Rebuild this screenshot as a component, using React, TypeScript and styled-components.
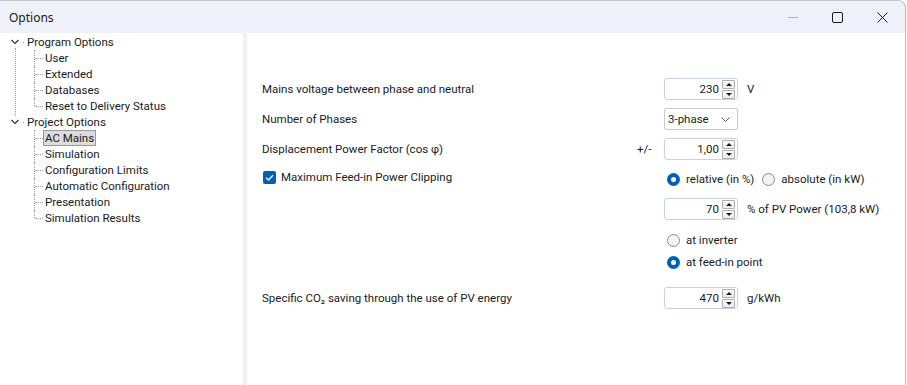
import * as React from "react";
import styled, { createGlobalStyle } from "styled-components";

const GlobalStyle = createGlobalStyle`
  html, body {
    margin: 0;
    padding: 0;
    background: #ffffff;
  }
  body {
    font-family: Roboto, "Noto Sans", "Liberation Sans", sans-serif;
    font-size: 11.5px;
    color: #1a1a1a;
  }
`;

const SWindow = styled.div`
  width: 906px;
  height: 385px;
  display: flex;
  flex-direction: column;
  border-top: 1px solid #c4c7cc;
  border-right: 1px solid #b8bcc2;
  border-top-right-radius: 8px;
  box-sizing: border-box;
  overflow: hidden;
  background: #eef1f7;
`;

const STitleBar = styled.div`
  height: 32px;
  flex: none;
  display: flex;
  align-items: center;
  justify-content: space-between;
  padding-left: 9px;
`;

const STitle = styled.span`
  font-family: "Noto Sans", sans-serif;
  font-size: 12px;
  color: #1a1a1a;
`;

const SCaptionButtons = styled.div`
  display: flex;
  height: 100%;
`;

const SCaptionButton = styled.div`
  width: 45px;
  height: 100%;
  display: flex;
  align-items: center;
  justify-content: center;
`;

const SBody = styled.div`
  flex: 1;
  display: flex;
  background: #ffffff;
`;

const STreePane = styled.div`
  width: 243px;
  flex: none;
  padding-top: 1px;
  background: #ffffff;
`;

const SSplitter = styled.div`
  width: 4px;
  flex: none;
  background: #f0f0f0;
`;

const SContent = styled.div`
  flex: 1;
  display: flex;
  flex-direction: column;
  padding-left: 15px;
`;

/* ---- tree ---- */

const STreeList = styled.ul`
  list-style: none;
  margin: 0;
  padding: 0;
`;

const SParent = styled.li<{ last?: boolean }>`
  position: relative;

  &::before {
    content: "";
    position: absolute;
    left: 15px;
    top: 14px;
    bottom: -2px;
    border-left: 1px dotted #a0a0a0;
    display: ${({ last }) => (last ? "none" : "block")};
  }
`;

const SParentRow = styled.div`
  height: 16px;
  display: flex;
  align-items: center;
  padding-left: 11px;
`;

const SChevron = styled.svg`
  width: 8px;
  height: 6px;
  flex: none;
`;

const SDotStub = styled.span`
  width: 1px;
  height: 1px;
  margin: 1px 3px 0 4px;
  background: #8a8a8a;
`;

const SChildren = styled.ul`
  list-style: none;
  margin: 0;
  padding: 0 0 0 34px;
`;

const SChild = styled.li<{ last?: boolean }>`
  position: relative;
  height: 16px;
  display: flex;
  align-items: center;
  padding-left: 11px;

  &::before {
    content: "";
    position: absolute;
    left: 0;
    top: 0;
    height: ${({ last }) => (last ? "8px" : "16px")};
    border-left: 1px dotted #a0a0a0;
  }

  &::after {
    content: "";
    position: absolute;
    left: 1px;
    top: 8px;
    width: 8px;
    border-top: 1px dotted #a0a0a0;
  }
`;

const SChildLabel = styled.span<{ selected?: boolean }>`
  padding: 0 1px;
  line-height: 14px;
  border: 1px solid ${({ selected }) => (selected ? "#9a9a9a" : "transparent")};
  background: ${({ selected }) => (selected ? "#dcdcdc" : "transparent")};
  margin-left: -2px;
`;

/* ---- form ---- */

const SRow = styled.div<{ top: number }>`
  display: grid;
  grid-template-columns: 375px 27px 1fr;
  align-items: center;
  height: 22px;
  margin-top: ${({ top }) => top}px;
`;

const SLabel = styled.span`
  white-space: nowrap;
`;

const SPrefix = styled.span``;

const SControlCell = styled.div`
  display: flex;
  align-items: center;
  gap: 9px;
  white-space: nowrap;
`;

const SSpin = styled.div`
  width: 74px;
  height: 22px;
  box-sizing: border-box;
  border: 1px solid #c6d3e3;
  border-radius: 3px;
  display: flex;
  align-items: center;
  justify-content: flex-end;
  padding-right: 2px;
  background: #ffffff;
`;

const SSpinValue = styled.span`
  margin-right: 3px;
`;

const SSpinButtons = styled.div`
  display: flex;
  flex-direction: column;
  gap: 1px;
`;

const SSpinButton = styled.div`
  width: 13px;
  height: 9px;
  box-sizing: border-box;
  border: 1px solid #adadad;
  border-radius: 1px;
  background: linear-gradient(#fafafa, #ececec);
  display: flex;
  align-items: center;
  justify-content: center;
`;

const SArrow = styled.span<{ down?: boolean }>`
  width: 0;
  height: 0;
  border-left: 3px solid transparent;
  border-right: 3px solid transparent;
  ${({ down }) =>
    down ? "border-top: 3px solid #1a1a1a;" : "border-bottom: 3px solid #1a1a1a;"}
`;

const SSelect = styled.div`
  width: 74px;
  height: 22px;
  box-sizing: border-box;
  border: 1px solid #c9c9c9;
  border-radius: 2px;
  display: flex;
  align-items: center;
  justify-content: space-between;
  padding: 0 7px 0 3px;
`;

const SCheckRow = styled.div`
  display: flex;
  align-items: center;
  gap: 5px;
  margin-left: 1px;
  margin-top: -4px;
`;

const SCheckbox = styled.span`
  width: 13px;
  height: 13px;
  border-radius: 2px;
  background: #005fb8;
  display: flex;
  align-items: center;
  justify-content: center;
`;

const SRadioGroup = styled.div`
  display: flex;
  align-items: center;
  gap: 8px;
  margin-left: 3px;
`;

const SRadioOption = styled.label`
  display: flex;
  align-items: center;
  gap: 6px;
`;

const SRadio = styled.span<{ checked?: boolean }>`
  width: 13px;
  height: 13px;
  box-sizing: border-box;
  border-radius: 50%;
  border: ${({ checked }) => (checked ? "4px solid #005fb8" : "1px solid #8a8a8a")};
  background: ${({ checked }) => (checked ? "#ffffff" : "#f3f3f3")};
`;

const Spin = ({ value }: { value: string }) => (
  <SSpin>
    <SSpinValue>{value}</SSpinValue>
    <SSpinButtons>
      <SSpinButton>
        <SArrow />
      </SSpinButton>
      <SSpinButton>
        <SArrow down />
      </SSpinButton>
    </SSpinButtons>
  </SSpin>
);

const Chevron = () => (
  <SChevron viewBox="0 0 8 6">
    <polyline points="0.5,1 4,4.5 7.5,1" fill="none" stroke="#333" strokeWidth="1.2" />
  </SChevron>
);

const tree = [
  {
    label: "Program Options",
    children: ["User", "Extended", "Databases", "Reset to Delivery Status"],
  },
  {
    label: "Project Options",
    children: [
      "AC Mains",
      "Simulation",
      "Configuration Limits",
      "Automatic Configuration",
      "Presentation",
      "Simulation Results",
    ],
  },
];

const App = () => {
  const selected = "AC Mains";
  return (
    <>
      <GlobalStyle />
      <SWindow>
        <STitleBar>
          <STitle>Options</STitle>
          <SCaptionButtons>
            <SCaptionButton>
              <svg width="10" height="10" viewBox="0 0 10 10">
                <line x1="0" y1="5.5" x2="10" y2="5.5" stroke="#b4b4b4" strokeWidth="1" />
              </svg>
            </SCaptionButton>
            <SCaptionButton>
              <svg width="11" height="11" viewBox="0 0 11 11">
                <rect x="0.5" y="0.5" width="10" height="10" rx="1.5" fill="none" stroke="#1a1a1a" />
              </svg>
            </SCaptionButton>
            <SCaptionButton>
              <svg width="11" height="11" viewBox="0 0 11 11">
                <path d="M0.5 0.5 L10.5 10.5 M10.5 0.5 L0.5 10.5" stroke="#1a1a1a" strokeWidth="1" />
              </svg>
            </SCaptionButton>
          </SCaptionButtons>
        </STitleBar>
        <SBody>
          <STreePane>
            <STreeList>
              {tree.map((node, i) => (
                <SParent key={node.label} last={i === tree.length - 1}>
                  <SParentRow>
                    <Chevron />
                    <SDotStub />
                    {node.label}
                  </SParentRow>
                  <SChildren>
                    {node.children.map((c, j) => (
                      <SChild key={c} last={j === node.children.length - 1}>
                        <SChildLabel selected={c === selected}>{c}</SChildLabel>
                      </SChild>
                    ))}
                  </SChildren>
                </SParent>
              ))}
            </STreeList>
          </STreePane>
          <SSplitter />
          <SContent>
            <SRow top={45}>
              <SLabel>Mains voltage between phase and neutral</SLabel>
              <SPrefix />
              <SControlCell>
                <Spin value="230" />
                <span>V</span>
              </SControlCell>
            </SRow>
            <SRow top={8}>
              <SLabel>Number of Phases</SLabel>
              <SPrefix />
              <SControlCell>
                <SSelect>
                  <span>3-phase</span>
                  <svg width="9" height="5" viewBox="0 0 9 5">
                    <polyline points="0.5,0.5 4.5,4.5 8.5,0.5" fill="none" stroke="#555" strokeWidth="1" />
                  </svg>
                </SSelect>
              </SControlCell>
            </SRow>
            <SRow top={8}>
              <SLabel>Displacement Power Factor (cos φ)</SLabel>
              <SPrefix>+/-</SPrefix>
              <SControlCell>
                <Spin value="1,00" />
              </SControlCell>
            </SRow>
            <SRow top={8}>
              <SCheckRow>
                <SCheckbox>
                  <svg width="9" height="7" viewBox="0 0 9 7">
                    <polyline points="1,3.6 3.4,6 8,1.2" fill="none" stroke="#fff" strokeWidth="1.3" />
                  </svg>
                </SCheckbox>
                <span>Maximum Feed-in Power Clipping</span>
              </SCheckRow>
              <SPrefix />
              <SRadioGroup>
                <SRadioOption>
                  <SRadio checked />
                  relative (in %)
                </SRadioOption>
                <SRadioOption>
                  <SRadio />
                  absolute (in kW)
                </SRadioOption>
              </SRadioGroup>
            </SRow>
            <SRow top={8}>
              <SLabel />
              <SPrefix />
              <SControlCell>
                <Spin value="70" />
                <span>% of PV Power (103,8 kW)</span>
              </SControlCell>
            </SRow>
            <SRow top={9}>
              <SLabel />
              <SPrefix />
              <SRadioGroup>
                <SRadioOption>
                  <SRadio />
                  at inverter
                </SRadioOption>
              </SRadioGroup>
            </SRow>
            <SRow top={0}>
              <SLabel />
              <SPrefix />
              <SRadioGroup>
                <SRadioOption>
                  <SRadio checked />
                  at feed-in point
                </SRadioOption>
              </SRadioGroup>
            </SRow>
            <SRow top={14}>
              <SLabel>Specific CO₂ saving through the use of PV energy</SLabel>
              <SPrefix />
              <SControlCell>
                <Spin value="470" />
                <span>g/kWh</span>
              </SControlCell>
            </SRow>
          </SContent>
        </SBody>
      </SWindow>
    </>
  );
};

export default App;
